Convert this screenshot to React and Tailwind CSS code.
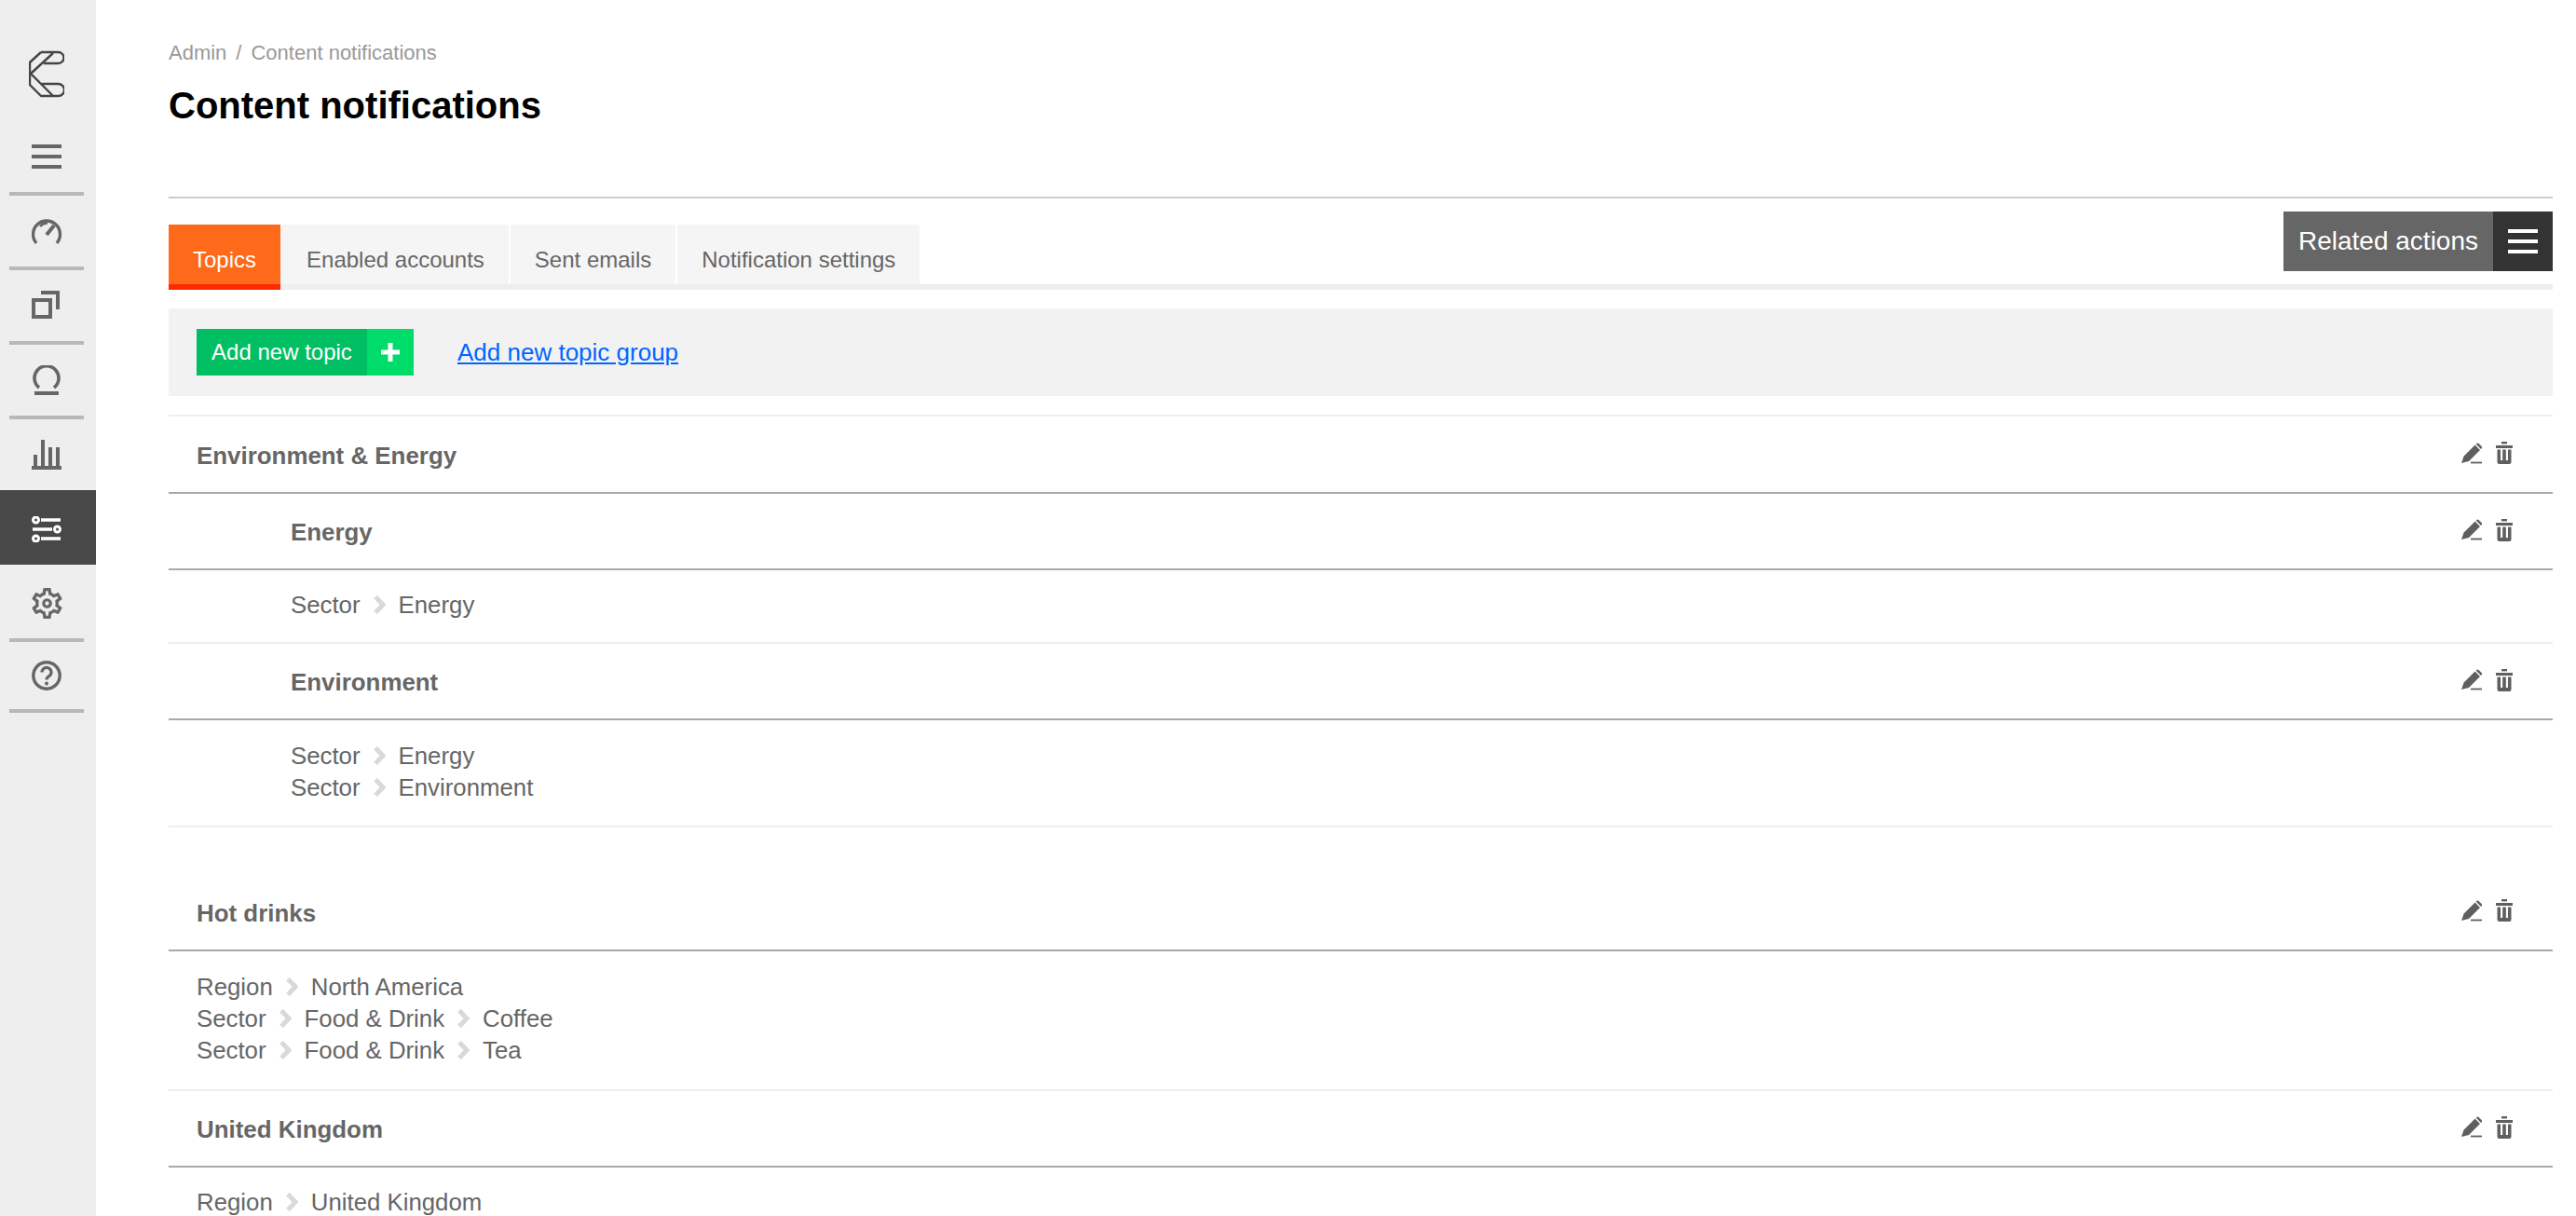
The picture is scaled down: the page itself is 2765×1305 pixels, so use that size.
const sans = "font-['Liberation_Sans',Arial,sans-serif]";

const LogoIcon = () => (
  <svg width="38" height="52" viewBox="31 54 38 52" fill="none" stroke="#444" strokeWidth="2.4" strokeLinejoin="round">
    <path d="M44 56H62.5a6 6 0 0 1 0 12H47" />
    <path d="M57 57L33 79L57 103" />
    <path d="M44 56L32 67V91L44 103H62.5a6.5 6.5 0 0 0 0-13H45" />
  </svg>
);

const MenuIcon = ({ color = "#666" }) => (
  <svg width="32" height="26" viewBox="0 0 32 26" fill={color}>
    <rect y="0" width="32" height="4" />
    <rect y="11" width="32" height="4" />
    <rect y="22" width="32" height="4" />
  </svg>
);

const DialIcon = () => (
  <svg width="32" height="32" viewBox="0 0 32 32" fill="none" stroke="#666" strokeWidth="3.4">
    <path d="M5 29A14.5 14.5 0 1 1 27 29" />
    <path d="M9 11A10 10 0 0 1 17 7.5" strokeWidth="2.6" />
    <path d="M16 20L24 10" strokeWidth="4" />
  </svg>
);

const BoxIcon = () => (
  <svg width="32" height="32" viewBox="0 0 32 32" fill="none" stroke="#666" strokeWidth="4">
    <rect x="2" y="10" width="18" height="18" />
    <path d="M10 2H28V20" />
  </svg>
);

const OmegaIcon = () => (
  <svg width="32" height="32" viewBox="0 0 32 32" fill="none" stroke="#666" strokeWidth="3.6">
    <path d="M8 24A13 13 0 1 1 24 24" />
    <path d="M3 30H29" strokeWidth="4" />
  </svg>
);

const BarsIcon = () => (
  <svg width="32" height="32" viewBox="0 0 32 32" fill="#666">
    <rect x="2" y="16" width="4" height="12" />
    <rect x="10" y="0" width="4" height="28" />
    <rect x="18" y="8" width="4" height="20" />
    <rect x="26" y="8" width="4" height="20" />
    <rect x="0" y="28" width="32" height="4" />
  </svg>
);

const SlidersIcon = () => (
  <svg width="32" height="28" viewBox="0 0 32 28" fill="none" stroke="#fff">
    <path d="M10 4H31M1 14H22M10 24H31" strokeWidth="3.6" />
    <circle cx="4.5" cy="4" r="3" strokeWidth="3" fill="#484848" />
    <circle cx="27.5" cy="14" r="3" strokeWidth="3" fill="#484848" />
    <circle cx="4.5" cy="24" r="3" strokeWidth="3" fill="#484848" />
  </svg>
);

const GearIcon = () => (
  <svg width="33" height="33" viewBox="2 2 20 20" fill="#666">
    <path d="M19.43 12.98c.04-.32.07-.64.07-.98s-.03-.66-.07-.98l2.11-1.65c.19-.15.24-.42.12-.64l-2-3.46c-.12-.22-.39-.3-.61-.22l-2.49 1c-.52-.4-1.08-.73-1.69-.98l-.38-2.65C14.46 2.18 14.25 2 14 2h-4c-.25 0-.46.18-.49.42l-.38 2.65c-.61.25-1.17.59-1.69.98l-2.49-1c-.23-.09-.49 0-.61.22l-2 3.46c-.13.22-.07.49.12.64l2.11 1.65c-.04.32-.07.65-.07.98s.03.66.07.98l-2.11 1.65c-.19.15-.24.42-.12.64l2 3.46c.12.22.39.3.61.22l2.49-1c.52.4 1.08.73 1.69.98l.38 2.65c.03.24.24.42.49.42h4c.25 0 .46-.18.49-.42l.38-2.65c.61-.25 1.17-.59 1.69-.98l2.49 1c.23.09.49 0 .61-.22l2-3.46c.12-.22.07-.49-.12-.64l-2.11-1.65zM17.45 11.27c.04.31.05.52.05.73s-.02.43-.05.73l-.14 1.13.89.7 1.08.84-.7 1.21-1.27-.51-1.04-.42-.9.68c-.43.32-.84.56-1.25.73l-1.06.43-.16 1.13-.2 1.35h-1.4l-.19-1.35-.16-1.13-1.06-.43c-.43-.18-.83-.41-1.23-.71l-.91-.7-1.06.43-1.27.51-.7-1.21 1.08-.84.89-.7-.14-1.13c-.03-.31-.05-.54-.05-.74s.02-.43.05-.73l.14-1.13-.89-.7-1.08-.84.7-1.21 1.27.51 1.04.42.9-.68c.43-.32.84-.56 1.25-.73l1.06-.43.16-1.13.2-1.35h1.39l.19 1.35.16 1.13 1.06.43c.43.18.83.41 1.23.71l.91.7 1.06-.43 1.27-.51.7 1.21-1.07.85-.89.7.14 1.13zM12 8.8a3.2 3.2 0 1 0 0 6.4a3.2 3.2 0 1 0 0-6.4zm0 4.5a1.3 1.3 0 1 1 0-2.6a1.3 1.3 0 1 1 0 2.6z" />
  </svg>
);

const HelpIcon = () => (
  <svg width="32" height="32" viewBox="0 0 32 32" fill="none" stroke="#666">
    <circle cx="16" cy="16" r="14.2" strokeWidth="3.4" />
    <path d="M11 12.5a5 5 0 1 1 7.6 4.2c-1.7 1.1-2.6 1.9-2.6 3.8" strokeWidth="3.2" />
    <circle cx="16" cy="24.5" r="2" fill="#666" stroke="none" />
  </svg>
);

const PencilIcon = () => (
  <svg width="23" height="23" viewBox="0 0 23 23" fill="#5f5f5f">
    <path d="M0 22L2.6 14.6L14.6 2.6L20 8L8 20Z" />
    <path d="M16 1.2a2 2 0 0 1 2.8 0L21.4 3.8a2 2 0 0 1 0 2.8L21 7L15.6 1.6Z" />
    <rect x="10" y="20.6" width="12" height="1.8" />
  </svg>
);

const TrashIcon = () => (
  <svg width="18" height="24" viewBox="0 0 18 24" fill="#5f5f5f">
    <rect x="6" y="0" width="6" height="2.4" />
    <rect x="0" y="4" width="18" height="3" />
    <path d="M1.5 8.5H5V20H7.2V8.5H10.8V20H13V8.5H16.5V22a2 2 0 0 1-2 2H3.5a2 2 0 0 1-2-2Z" />
  </svg>
);

const Chevron = () => (
  <svg width="13" height="20" viewBox="0 0 13 20" fill="none" stroke="#d9d9d9" strokeWidth="5" className="mx-[14px] shrink-0">
    <path d="M2 1.5L10 10L2 18.5" />
  </svg>
);

const sideItems = [
  { key: "dial", icon: <DialIcon /> },
  { key: "box", icon: <BoxIcon /> },
  { key: "omega", icon: <OmegaIcon /> },
  { key: "bars", icon: <BarsIcon /> },
];

const Sidebar = () => (
  <aside className="w-[103px] shrink-0 bg-[#eeeeee] flex flex-col">
    <div className="h-[126px] flex items-center justify-center pt-[34px] pr-[3px]">
      <LogoIcon />
    </div>
    <div className="h-[84px] w-[80px] ml-[10px] border-b-[4px] border-[#b8b8b8] flex items-center justify-center pt-[4px]">
      <MenuIcon />
    </div>
    {sideItems.map((item) => (
      <div key={item.key} className="h-[80px] w-[80px] ml-[10px] border-b-[4px] border-[#b8b8b8] flex items-center justify-center">
        {item.icon}
      </div>
    ))}
    <div className="h-[80px] -mt-[4px] bg-[#484848] flex items-center justify-center pr-[3px] pt-[4px]">
      <SlidersIcon />
    </div>
    <div className="h-[83px] w-[80px] ml-[10px] border-b-[4px] border-[#b8b8b8] flex items-center justify-center pt-[3px]">
      <GearIcon />
    </div>
    <div className="h-[76px] w-[80px] ml-[10px] border-b-[4px] border-[#b8b8b8] flex items-center justify-center">
      <HelpIcon />
    </div>
  </aside>
);

const Tabs = () => (
  <div className="flex items-stretch justify-between h-[98px] border-b-[6px] border-[#eeeeee]">
    <div className="flex self-end h-[64px] text-[24px] text-[#666666]">
      <div className="h-[70px] bg-[#ff6a1a] border-b-[6px] border-[#ff2a00] text-white px-[26px] flex items-center pt-[12px]">Topics</div>
      <div className="h-[64px] bg-[#f5f5f5] pl-[28px] pr-[26px] flex items-center pt-[12px]">Enabled accounts</div>
      <div className="h-[64px] bg-[#f5f5f5] ml-[2px] px-[26px] flex items-center pt-[12px]">Sent emails</div>
      <div className="h-[64px] bg-[#f5f5f5] ml-[2px] px-[26px] flex items-center pt-[12px]">Notification settings</div>
    </div>
    <div className="flex h-[64px] mt-[14px]">
      <div className="w-[225px] bg-[#666666] text-white text-[28px] flex items-center justify-center">Related actions</div>
      <div className="w-[64px] bg-[#333333] flex items-center justify-center">
        <MenuIcon color="#fff" />
      </div>
    </div>
  </div>
);

const Toolbar = () => (
  <div className="mt-[20px] h-[94px] bg-[#f2f2f2] flex items-center pl-[30px] gap-[47px]">
    <div className="flex h-[50px] text-[24px] text-white">
      <div className="w-[183px] bg-[#00bf63] flex items-center justify-center">Add new topic</div>
      <div className="w-[50px] bg-[#00dc6a] flex items-center justify-center">
        <svg width="20" height="20" viewBox="0 0 20 20" fill="#fff">
          <rect x="7.5" y="0" width="5" height="20" />
          <rect x="0" y="7.5" width="20" height="5" />
        </svg>
      </div>
    </div>
    <a className="text-[26px] text-[#0066ff] underline">Add new topic group</a>
  </div>
);

const RowHeader = ({ title, child, first }) => (
  <div className={`${first ? "h-[83px]" : "h-[82px]"} pt-[3px] border-b-2 border-[#a9a9a9] flex items-center justify-between pr-[43px] ${child ? "pl-[131px]" : "pl-[30px]"}`}>
    <span className="font-bold text-[25.9px] text-[#666666]">{title}</span>
    <div className="flex items-center gap-[14px] -mt-[6px]">
      <PencilIcon />
      <TrashIcon />
    </div>
  </div>
);

const pathPadding = { 1: "pt-[20px] pb-[23px]", 2: "pt-[21px] pb-[24px]", 3: "pt-[21px] pb-[25px]" };

const RowPaths = ({ paths, child }) => (
  <div className={`${pathPadding[paths.length]} border-b-2 border-[#eeeeee] text-[25.8px] leading-[34px] text-[#666666] ${child ? "pl-[131px]" : "pl-[30px]"}`}>
    {paths.map((path) => (
      <div key={path.join("-")} className="flex items-center">
        {path.map((part, i) => (
          <span key={part} className="flex items-center">
            {i > 0 && <Chevron />}
            {part}
          </span>
        ))}
      </div>
    ))}
  </div>
);

const groups = [
  {
    title: "Environment & Energy",
    topics: [
      { title: "Energy", child: true, paths: [["Sector", "Energy"]] },
      { title: "Environment", child: true, paths: [["Sector", "Energy"], ["Sector", "Environment"]] },
    ],
  },
  {
    topics: [
      {
        title: "Hot drinks",
        paths: [["Region", "North America"], ["Sector", "Food & Drink", "Coffee"], ["Sector", "Food & Drink", "Tea"]],
      },
      { title: "United Kingdom", paths: [["Region", "United Kingdom"]] },
    ],
  },
];

export default function App() {
  return (
    <div className={`h-screen overflow-hidden flex bg-white ${sans}`}>
      <Sidebar />
      <main className="flex-1 min-w-0 pl-[78px] pr-[25px]">
        <div className="h-[211px] pt-[41px]">
          <div className="text-[22px] leading-[32px] text-[#999999]">
            Admin<span className="mx-[10px]">/</span>Content notifications
          </div>
          <h1 className="mt-[16px] text-[40px] leading-[48px] font-bold text-black">Content notifications</h1>
        </div>
        <div className="h-[2px] bg-[#cccccc]" />
        <Tabs />
        <Toolbar />
        <div className="mt-[20px] border-t-2 border-[#eeeeee]">
          {groups.map((group, g) => (
            <div key={g} className="mb-[50px]">
              {group.title && <RowHeader title={group.title} first />}
              {group.topics.map((topic, t) => (
                <div key={topic.title}>
                  <RowHeader title={topic.title} child={topic.child} first={!group.title && t === 0} />
                  <RowPaths paths={topic.paths} child={topic.child} />
                </div>
              ))}
            </div>
          ))}
        </div>
      </main>
    </div>
  );
}
